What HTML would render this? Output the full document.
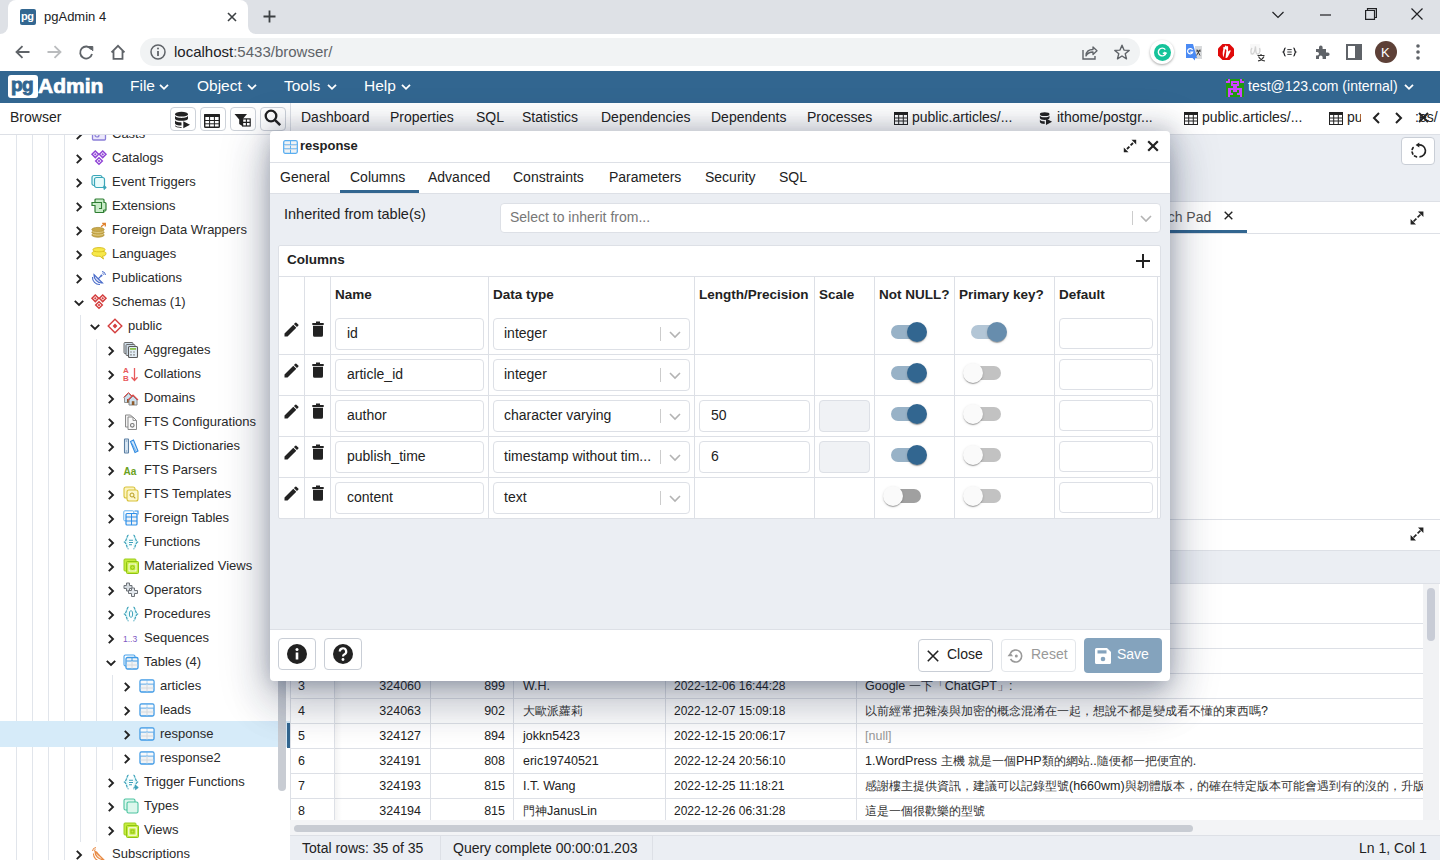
<!DOCTYPE html><html><head><meta charset="utf-8"><title>pgAdmin 4</title><style>
*{box-sizing:border-box;margin:0;padding:0}
html,body{width:1440px;height:860px;overflow:hidden;background:#fff;font-family:"Liberation Sans",sans-serif;color:#222}
.ab{position:absolute}
.t{position:absolute;white-space:nowrap;line-height:1}
svg{position:absolute;overflow:visible}
</style></head><body>
<div class="ab" style="left:0;top:0;width:1440px;height:34px;background:#dee1e6"></div>
<div class="ab" style="left:8px;top:0px;width:240px;height:35px;background:#fff;border-radius:8px 8px 0 0"></div>
<div class="ab" style="left:0px;top:26px;width:8px;height:8px;background:#fff"></div><div class="ab" style="left:0px;top:26px;width:8px;height:8px;background:#dee1e6;border-bottom-right-radius:8px"></div>
<div class="ab" style="left:248px;top:26px;width:8px;height:8px;background:#fff"></div><div class="ab" style="left:248px;top:26px;width:8px;height:8px;background:#dee1e6;border-bottom-left-radius:8px"></div>
<div class="ab" style="left:20px;top:9px;width:16px;height:16px;background:#336791;border-radius:2px"></div>
<div class="t" style="left:21px;top:11px;font-size:11px;font-weight:bold;color:#fff;letter-spacing:-0.5px">pg</div>
<div class="t" style="left:44px;top:10px;font-size:13px;color:#202124">pgAdmin 4</div>
<svg style="left:227px;top:12px" width="10" height="10" viewBox="0 0 10 10"><path d="M1 1L9 9M9 1L1 9" stroke="#3c4043" stroke-width="1.6"/></svg>
<svg style="left:263px;top:10px" width="13" height="13" viewBox="0 0 13 13"><path d="M6.5 0.5V12.5M0.5 6.5H12.5" stroke="#3c4043" stroke-width="1.8"/></svg>
<svg style="left:1272px;top:11px" width="12" height="8" viewBox="0 0 12 8"><path d="M0.5 1L6 6.5L11.5 1" fill="none" stroke="#202124" stroke-width="1.2"/></svg>
<svg style="left:1320px;top:14px" width="11" height="2" viewBox="0 0 11 2"><path d="M0 1H11" stroke="#202124" stroke-width="1.2"/></svg>
<svg style="left:1365px;top:8px" width="12" height="12" viewBox="0 0 12 12"><path d="M2.5 2.5V0.6H11.4V9.5H9.5M0.6 2.5H9.5V11.4H0.6Z" fill="none" stroke="#202124" stroke-width="1.2"/></svg>
<svg style="left:1411px;top:8px" width="12" height="12" viewBox="0 0 12 12"><path d="M0.5 0.5L11.5 11.5M11.5 0.5L0.5 11.5" stroke="#202124" stroke-width="1.2"/></svg>
<div class="ab" style="left:0;top:34px;width:1440px;height:37px;background:#fff"></div>
<svg style="left:15px;top:45px" width="15" height="14" viewBox="0 0 15 14"><path d="M14.5 7H2M7.5 1.2L1.5 7L7.5 12.8" fill="none" stroke="#5f6368" stroke-width="1.8"/></svg>
<svg style="left:47px;top:45px" width="15" height="14" viewBox="0 0 15 14"><path d="M0.5 7H13M7.5 1.2L13.5 7L7.5 12.8" fill="none" stroke="#babcbe" stroke-width="1.8"/></svg>
<svg style="left:79px;top:45px" width="15" height="15" viewBox="0 0 15 15"><path d="M12.2 4.2A6 6 0 1 0 13 9" fill="none" stroke="#5f6368" stroke-width="1.8"/><path d="M9.5 1.5H13.8V5.8Z" fill="#5f6368" stroke="#5f6368" stroke-width="1"/></svg>
<svg style="left:110px;top:44px" width="16" height="16" viewBox="0 0 16 16"><path d="M1.5 8.3L8 1.8L14.5 8.3M3.5 6.5V14.8H12.5V6.5" fill="none" stroke="#5f6368" stroke-width="1.8"/></svg>
<div class="ab" style="left:140px;top:38px;width:1000px;height:28px;background:#f1f3f4;border-radius:14px"></div>
<svg style="left:150px;top:44px" width="16" height="16" viewBox="0 0 16 16"><circle cx="8" cy="8" r="7" fill="none" stroke="#5f6368" stroke-width="1.5"/><path d="M8 7V12" stroke="#5f6368" stroke-width="1.8"/><circle cx="8" cy="4.6" r="1" fill="#5f6368"/></svg>
<div class="t" style="left:174px;top:44px;font-size:15px;color:#202124">localhost<span style="color:#5f6368">:5433/browser/</span></div>
<svg style="left:1082px;top:44px" width="16" height="16" viewBox="0 0 16 16"><path d="M1 6V15H13V12" fill="none" stroke="#5f6368" stroke-width="1.4"/><path d="M4 12C4 7 7 5.5 11 5.5V3L15 6.8L11 10.5V8C8 8 5.5 9 4 12Z" fill="none" stroke="#5f6368" stroke-width="1.3" stroke-linejoin="round"/></svg>
<svg style="left:1114px;top:44px" width="16" height="16" viewBox="0 0 16 16"><path d="M8 1.2L10 6.1L15.2 6.4L11.2 9.7L12.5 14.8L8 12L3.5 14.8L4.8 9.7L0.8 6.4L6 6.1Z" fill="none" stroke="#5f6368" stroke-width="1.4" stroke-linejoin="round"/></svg>
<div class="ab" style="left:1150px;top:40px;width:24px;height:24px;border-radius:50%;background:#fff;box-shadow:0 1px 2.5px rgba(0,0,0,.35)"></div><div class="ab" style="left:1153.5px;top:43.5px;width:17px;height:17px;border-radius:50%;background:#15c39a"></div>
<svg style="left:1157px;top:47px" width="10" height="10" viewBox="0 0 10 10"><path d="M8.3 2.6A3.9 3.9 0 1 0 8.9 6.3H5.8" fill="none" stroke="#fff" stroke-width="1.4"/><path d="M7.3 5L9 6.3L7.6 8" fill="none" stroke="#fff" stroke-width="1.1"/></svg>
<svg style="left:1180px;top:38px" width="120" height="28" viewBox="0 0 120 28"><rect x="15" y="8" width="7" height="13" fill="#d8dadc"/><path d="M17 11.5L20 17.5M20 11.5L16.5 17.5M16 13H21" stroke="#333" stroke-width="0.9" fill="none"/><path d="M6 6H13L17 20H15L15 22.5L12.5 20H6Z" fill="#4a8af4"/><path d="M12.5 12A2.6 2.6 0 1 0 12.6 14.2H10.2" fill="none" stroke="#fff" stroke-width="1.2"/><path d="M42.5 6H49.5L54 10.5V17.5L49.5 22H42.5L38 17.5V10.5Z" fill="#e00a0a"/><path d="M43.5 19.5C42.5 17 42.5 14 43.3 11.5V9.5C43.3 8.5 44.9 8.5 44.9 9.5V12.5M44.9 11V8.3C44.9 7.3 46.5 7.3 46.5 8.3V12M46.5 11.5V8.8C46.5 7.8 48.1 7.8 48.1 8.8V13.5L49.5 12.5C50.3 12 51 12.8 50.5 13.5L48 18.5C47.5 19.5 46.5 20 45.5 20Z" fill="#fff"/><path d="M72 10C70.5 12 70.5 16 72.5 16C74.5 16 75 11 75.5 8.5C75.8 12 75.5 16.5 78 16C80 15.5 80 12 79.5 10" fill="none" stroke="#b5b5b5" stroke-width="1.3"/><rect x="70" y="6" width="10" height="11" fill="#f2f2f2" opacity=".5"/><path d="M77.5 17.5H84.5M81 16V17.5M78.5 18.5C80 21.5 82 22.5 85 23M84 18.5C82.5 21.5 80.5 22.5 78 23" fill="none" stroke="#333" stroke-width="1.1"/><path d="M105.5 10C104 10 104.5 13.5 103.3 14C104.5 14.5 104 18 105.5 18M113.5 10C115 10 114.5 13.5 115.7 14C114.5 14.5 115 18 113.5 18" fill="none" stroke="#202124" stroke-width="1.3"/><path d="M107.3 11.6H111.7M107.3 14H111.7M107.3 16.4H111.7" stroke="#202124" stroke-width="0.9"/></svg>
<svg style="left:1314px;top:44px" width="16" height="16" viewBox="0 0 16 16"><path d="M2 5H5V3.2A1.8 1.8 0 0 1 8.6 3.2V5H12V8.4H13.8A1.8 1.8 0 0 1 13.8 12H12V15H8.6V13.2A1.8 1.8 0 0 0 5 13.2V15H2V11.6H3.2A1.8 1.8 0 0 0 3.2 8H2Z" fill="#5f6368"/></svg>
<svg style="left:1346px;top:44px" width="16" height="16" viewBox="0 0 16 16"><rect x="1" y="1" width="14" height="14" fill="none" stroke="#5f6368" stroke-width="2"/><rect x="9" y="1" width="6" height="14" fill="#5f6368"/></svg>
<div class="ab" style="left:1375px;top:41px;width:22px;height:22px;border-radius:50%;background:#5d4037"></div><div class="t" style="left:1381px;top:46px;font-size:13px;color:#fff">K</div>
<svg style="left:1416px;top:44px" width="4" height="16" viewBox="0 0 4 16"><circle cx="2" cy="2" r="1.8" fill="#5f6368"/><circle cx="2" cy="8" r="1.8" fill="#5f6368"/><circle cx="2" cy="14" r="1.8" fill="#5f6368"/></svg>
<div class="ab" style="left:0;top:71px;width:1440px;height:32px;background:#326690"></div>
<div class="ab" style="left:8px;top:75px;width:30px;height:23px;background:#fff;border-radius:3px"></div>
<div class="t" style="left:11px;top:75px;font-size:19px;font-weight:bold;color:#326690;letter-spacing:-0.5px;-webkit-text-stroke:0.9px #326690">pg</div>
<div class="t" style="left:38px;top:75px;font-size:21px;font-weight:bold;color:#fff;letter-spacing:0px;-webkit-text-stroke:0.7px #fff">Admin</div>
<div class="t" style="left:130px;top:78px;font-size:15.5px;color:#fff">File</div><svg style="left:159px;top:84px" width="10" height="6" viewBox="0 0 10 6"><path d="M1 0.8L5 4.8L9 0.8" fill="none" stroke="#fff" stroke-width="1.8"/></svg>
<div class="t" style="left:197px;top:78px;font-size:15.5px;color:#fff">Object</div><svg style="left:247px;top:84px" width="10" height="6" viewBox="0 0 10 6"><path d="M1 0.8L5 4.8L9 0.8" fill="none" stroke="#fff" stroke-width="1.8"/></svg>
<div class="t" style="left:284px;top:78px;font-size:15.5px;color:#fff">Tools</div><svg style="left:327px;top:84px" width="10" height="6" viewBox="0 0 10 6"><path d="M1 0.8L5 4.8L9 0.8" fill="none" stroke="#fff" stroke-width="1.8"/></svg>
<div class="t" style="left:364px;top:78px;font-size:15.5px;color:#fff">Help</div><svg style="left:401px;top:84px" width="10" height="6" viewBox="0 0 10 6"><path d="M1 0.8L5 4.8L9 0.8" fill="none" stroke="#fff" stroke-width="1.8"/></svg>
<svg style="left:1226px;top:79px" width="18" height="18" viewBox="0 0 10 10" shape-rendering="crispEdges"><rect width="10" height="10" fill="#1f9a0e"/><g fill="#cc44ff"><rect x="1" y="0" width="1.02" height="1.02"/><rect x="8" y="0" width="1.02" height="1.02"/><rect x="0" y="1" width="1.02" height="1.02"/><rect x="1" y="1" width="1.02" height="1.02"/><rect x="3" y="1" width="1.02" height="1.02"/><rect x="4" y="1" width="1.02" height="1.02"/><rect x="5" y="1" width="1.02" height="1.02"/><rect x="6" y="1" width="1.02" height="1.02"/><rect x="8" y="1" width="1.02" height="1.02"/><rect x="9" y="1" width="1.02" height="1.02"/><rect x="3" y="2" width="1.02" height="1.02"/><rect x="6" y="2" width="1.02" height="1.02"/><rect x="3" y="3" width="1.02" height="1.02"/><rect x="4" y="3" width="1.02" height="1.02"/><rect x="5" y="3" width="1.02" height="1.02"/><rect x="6" y="3" width="1.02" height="1.02"/><rect x="4" y="4" width="1.02" height="1.02"/><rect x="5" y="4" width="1.02" height="1.02"/><rect x="1" y="5" width="1.02" height="1.02"/><rect x="2" y="5" width="1.02" height="1.02"/><rect x="3" y="5" width="1.02" height="1.02"/><rect x="4" y="5" width="1.02" height="1.02"/><rect x="5" y="5" width="1.02" height="1.02"/><rect x="6" y="5" width="1.02" height="1.02"/><rect x="7" y="5" width="1.02" height="1.02"/><rect x="8" y="5" width="1.02" height="1.02"/><rect x="1" y="6" width="1.02" height="1.02"/><rect x="2" y="6" width="1.02" height="1.02"/><rect x="4" y="6" width="1.02" height="1.02"/><rect x="5" y="6" width="1.02" height="1.02"/><rect x="7" y="6" width="1.02" height="1.02"/><rect x="8" y="6" width="1.02" height="1.02"/><rect x="1" y="7" width="1.02" height="1.02"/><rect x="2" y="7" width="1.02" height="1.02"/><rect x="7" y="7" width="1.02" height="1.02"/><rect x="8" y="7" width="1.02" height="1.02"/><rect x="1" y="8" width="1.02" height="1.02"/><rect x="2" y="8" width="1.02" height="1.02"/><rect x="3" y="8" width="1.02" height="1.02"/><rect x="6" y="8" width="1.02" height="1.02"/><rect x="7" y="8" width="1.02" height="1.02"/><rect x="8" y="8" width="1.02" height="1.02"/><rect x="1" y="9" width="1.02" height="1.02"/><rect x="8" y="9" width="1.02" height="1.02"/></g></svg>
<div class="t" style="left:1248px;top:79px;font-size:14px;color:#fff">test@123.com (internal)</div><svg style="left:1404px;top:84px" width="10" height="6" viewBox="0 0 10 6"><path d="M1 0.8L5 4.8L9 0.8" fill="none" stroke="#fff" stroke-width="1.8"/></svg>
<div class="ab" style="left:0;top:103px;width:290px;height:32px;background:#fff;border-bottom:1px solid #dde0e6"></div>
<div class="t" style="left:10px;top:110px;font-size:14px;color:#222">Browser</div>
<div class="ab" style="left:170px;top:107px;width:26px;height:24px;border:1px solid #cdd2d9;border-radius:4px;background:#fff"></div>
<div class="ab" style="left:200px;top:107px;width:26px;height:24px;border:1px solid #cdd2d9;border-radius:4px;background:#fff"></div>
<div class="ab" style="left:230px;top:107px;width:26px;height:24px;border:1px solid #cdd2d9;border-radius:4px;background:#fff"></div>
<div class="ab" style="left:260px;top:107px;width:26px;height:24px;border:1px solid #cdd2d9;border-radius:4px;background:#fff"></div>
<svg style="left:174px;top:111px" width="17" height="18" viewBox="0 0 17 18"><ellipse cx="7.5" cy="3.2" rx="6.5" ry="2.4" fill="#222"/><path d="M1 4.6V7.4C1 8.9 4 9.8 7.5 9.8S14 8.9 14 7.4V4.6C14 6.1 11 7 7.5 7S1 6.1 1 4.6Z" fill="#222"/><path d="M1 9V12.2C1 13.7 4 14.6 7.5 14.6V11.4C4 11.4 1 10.5 1 9Z" fill="#222"/><path d="M1 13.8V14.5C1 16 4 16.9 7.5 16.9V16C4 16 1 15.3 1 13.8Z" fill="#222"/><path d="M9.3 10.2V17.3L16 13.75Z" fill="#222"/></svg>
<svg style="left:204px;top:114px" width="16" height="14" viewBox="0 0 16 14"><rect x="0.7" y="0.7" width="14.6" height="12.6" rx=".8" fill="#fff" stroke="#222" stroke-width="1.4"/><rect x="0" y="0" width="16" height="3" rx=".8" fill="#222"/><path d="M0.7 6.5H15.3M0.7 9.8H15.3M5.6 3V13.3M10.4 3V13.3" stroke="#222" stroke-width="1"/></svg>
<svg style="left:234px;top:113px" width="17" height="14" viewBox="0 0 17 14"><path d="M0.5 1H13L8.3 6.5V13L5.2 11V6.5Z" fill="#222"/><rect x="8.6" y="5.9" width="7.6" height="7.1" fill="#fff" stroke="#222" stroke-width="1.2"/><path d="M8.6 9.4H16.2M12.4 5.9V13" stroke="#222" stroke-width="1.1"/></svg>
<svg style="left:264px;top:109px" width="18" height="18" viewBox="0 0 18 18"><circle cx="7" cy="7" r="5.3" fill="none" stroke="#222" stroke-width="2.3"/><path d="M10.8 10.8L16.2 16.2" stroke="#222" stroke-width="2.5"/></svg>
<div class="ab" style="left:290px;top:103px;width:1150px;height:31px;background:#fff;border-left:1px solid #dde0e6"></div>
<div class="t" style="left:301px;top:110px;font-size:14px;color:#222">Dashboard</div>
<div class="t" style="left:390px;top:110px;font-size:14px;color:#222">Properties</div>
<div class="t" style="left:476px;top:110px;font-size:14px;color:#222">SQL</div>
<div class="t" style="left:522px;top:110px;font-size:14px;color:#222">Statistics</div>
<div class="t" style="left:601px;top:110px;font-size:14px;color:#222">Dependencies</div>
<div class="t" style="left:711px;top:110px;font-size:14px;color:#222">Dependents</div>
<div class="t" style="left:807px;top:110px;font-size:14px;color:#222">Processes</div>
<svg style="left:894px;top:112px" width="14" height="13" viewBox="0 0 14 13"><rect x="0.5" y="0.5" width="13" height="12" fill="none" stroke="#222" stroke-width="1"/><rect x="0" y="0" width="14" height="3" fill="#222"/><path d="M0 6H14M0 9H14M4.7 3V13M9.3 3V13" stroke="#222" stroke-width="1"/></svg><div class="t" style="left:912px;top:110px;font-size:14px;color:#222">public.articles/...</div>
<svg style="left:1039px;top:111px" width="14" height="15" viewBox="0 0 16 16"><ellipse cx="6.5" cy="3" rx="5.5" ry="2.2" fill="#222"/><path d="M1 4.5V7.5C1 9 4 9.7 6.5 9.7S12 9 12 7.5V4.5C12 6 9 6.7 6.5 6.7S1 6 1 4.5Z" fill="#222"/><path d="M1 9V12C1 13.5 4 14.2 6.5 14.2V11.2C4 11.2 1 10.5 1 9Z" fill="#222"/><path d="M8 8V15.5L15 11.7Z" fill="#222"/></svg>
<div class="t" style="left:1057px;top:110px;font-size:14px;color:#222">ithome/postgr...</div>
<svg style="left:1184px;top:112px" width="14" height="13" viewBox="0 0 14 13"><rect x="0.5" y="0.5" width="13" height="12" fill="none" stroke="#222" stroke-width="1"/><rect x="0" y="0" width="14" height="3" fill="#222"/><path d="M0 6H14M0 9H14M4.7 3V13M9.3 3V13" stroke="#222" stroke-width="1"/></svg><div class="t" style="left:1202px;top:110px;font-size:14px;color:#222">public.articles/...</div>
<svg style="left:1329px;top:112px" width="14" height="13" viewBox="0 0 14 13"><rect x="0.5" y="0.5" width="13" height="12" fill="none" stroke="#222" stroke-width="1"/><rect x="0" y="0" width="14" height="3" fill="#222"/><path d="M0 6H14M0 9H14M4.7 3V13M9.3 3V13" stroke="#222" stroke-width="1"/></svg><div class="ab" style="left:1347px;top:103px;width:14px;height:30px;overflow:hidden"><div class="t" style="left:0;top:7px;font-size:14px;color:#222">public</div></div>
<svg style="left:1372px;top:112px" width="8" height="12" viewBox="0 0 8 12"><path d="M7 1L2 6L7 11" fill="none" stroke="#222" stroke-width="2"/></svg>
<svg style="left:1395px;top:112px" width="8" height="12" viewBox="0 0 8 12"><path d="M1 1L6 6L1 11" fill="none" stroke="#222" stroke-width="2"/></svg>
<div class="ab" style="left:1415px;top:103px;width:25px;height:30px;overflow:hidden"><div class="t" style="left:0px;top:7px;font-size:14px;color:#222">:es/</div></div>
<svg style="left:1418px;top:112px" width="11" height="11" viewBox="0 0 11 11"><path d="M1 1L10 10M10 1L1 10" stroke="#222" stroke-width="2"/></svg>
<div class="ab" style="left:290px;top:134px;width:1150px;height:726px;background:#fff;border-left:1px solid #dde0e6"></div>
<div class="ab" style="left:290px;top:134px;width:1150px;height:68px;background:#ebeef3;border-top:1px solid #dde0e6;border-bottom:1px solid #dde0e6"></div>
<div class="ab" style="left:1401px;top:137px;width:34px;height:28px;background:#fff;border:1px solid #c9ced6;border-radius:4px"></div>
<svg style="left:1410px;top:143px" width="16" height="16" viewBox="0 0 16 16"><path d="M8 2A6 6 0 1 1 9.45 13.82" fill="none" stroke="#222" stroke-width="1.7"/><path d="M6.45 13.8L4.56 12.91M2.8 11L2.09 9.04M2.2 6.45L3.09 4.56" fill="none" stroke="#222" stroke-width="1.7" stroke-linecap="round"/><path d="M9.3 -0.6L5.6 2L9.3 4.6Z" fill="#222"/></svg>
<div class="ab" style="left:290px;top:202px;width:1150px;height:32px;background:#fff;border-bottom:1px solid #dde0e6"></div>
<div class="t" style="left:1135px;top:210px;font-size:14px;color:#555">Scratch Pad</div>
<svg style="left:1224px;top:211px" width="9" height="9" viewBox="0 0 9 9"><path d="M0.7 0.7L8.3 8.3M8.3 0.7L0.7 8.3" stroke="#222" stroke-width="1.4"/></svg>
<div class="ab" style="left:1080px;top:230px;width:167px;height:3px;background:#326690"></div>
<svg style="left:1410px;top:211px" width="14" height="14" viewBox="0 0 14 14"><path d="M10.5 3.5L7.6 6.4M6.4 7.6L3.5 10.5" stroke="#222" stroke-width="1.7"/><path d="M8 0.6H13.4V6Z M0.6 8V13.4H6Z" fill="#222"/></svg>
<div class="ab" style="left:290px;top:519px;width:1150px;height:1px;background:#dde0e6"></div>
<svg style="left:1410px;top:527px" width="14" height="14" viewBox="0 0 14 14"><path d="M10.5 3.5L7.6 6.4M6.4 7.6L3.5 10.5" stroke="#222" stroke-width="1.7"/><path d="M8 0.6H13.4V6Z M0.6 8V13.4H6Z" fill="#222"/></svg>
<div class="ab" style="left:290px;top:550px;width:1150px;height:34px;background:#ebeef3;border-top:1px solid #dde0e6;border-bottom:1px solid #dde0e6"></div>
<div class="ab" style="left:0;top:135px;width:290px;height:725px;overflow:hidden;background:#fff">
<div class="ab" style="left:16px;top:0px;width:1px;height:725px;background:#e1e5eb"></div>
<div class="ab" style="left:32px;top:0px;width:1px;height:725px;background:#e1e5eb"></div>
<div class="ab" style="left:48px;top:0px;width:1px;height:725px;background:#e1e5eb"></div>
<div class="ab" style="left:64px;top:0px;width:1px;height:725px;background:#e1e5eb"></div>
<div class="ab" style="left:80px;top:180px;width:1px;height:527px;background:#e1e5eb"></div>
<div class="ab" style="left:96px;top:204px;width:1px;height:503px;background:#e1e5eb"></div>
<div class="ab" style="left:112px;top:540px;width:1px;height:95px;background:#e1e5eb"></div>
<div class="ab" style="left:0;top:586px;width:290px;height:26px;background:#d6ebf9"></div>
<svg style="left:76px;top:-5px" width="6" height="10" viewBox="0 0 6 10"><path d="M0.8 0.8L5 5L0.8 9.2" fill="none" stroke="#222" stroke-width="1.9"/></svg>
<svg style="left:91px;top:-9px" width="16" height="16" viewBox="0 0 16 16"><rect x="1.5" y="3" width="13" height="11" rx="1" fill="#ebe7fb" stroke="#8b7fd8" stroke-width="1.3"/><circle cx="6" cy="9" r="2" fill="none" stroke="#8b7fd8" stroke-width="1.2"/><path d="M9 7L12 5" stroke="#8b7fd8" stroke-width="1.2"/></svg>
<div class="t" style="left:112px;top:-8px;font-size:13px;color:#2a2a2a">Casts</div>
<svg style="left:76px;top:19px" width="6" height="10" viewBox="0 0 6 10"><path d="M0.8 0.8L5 5L0.8 9.2" fill="none" stroke="#222" stroke-width="1.9"/></svg>
<svg style="left:91px;top:15px" width="16" height="16" viewBox="0 0 16 16"><g fill="#fff" stroke="#9146d6" stroke-width="1.5"><path d="M4.3 1L7.6 4.3L4.3 7.6L1 4.3Z"/><path d="M11.7 1L15 4.3L11.7 7.6L8.4 4.3Z"/><path d="M8 7.7L11.3 11L8 14.3L4.7 11Z"/></g><g fill="#9146d6"><circle cx="4.3" cy="4.3" r="1.1"/><circle cx="11.7" cy="4.3" r="1.1"/><circle cx="8" cy="11" r="1.1"/><circle cx="8" cy="4.3" r=".8"/></g></svg>
<div class="t" style="left:112px;top:16px;font-size:13px;color:#2a2a2a">Catalogs</div>
<svg style="left:76px;top:43px" width="6" height="10" viewBox="0 0 6 10"><path d="M0.8 0.8L5 5L0.8 9.2" fill="none" stroke="#222" stroke-width="1.9"/></svg>
<svg style="left:91px;top:39px" width="16" height="16" viewBox="0 0 16 16"><rect x="1" y="1.5" width="10" height="10" rx="2" fill="#e8fbfb" stroke="#3aa6b9" stroke-width="1.2"/><rect x="3.5" y="3.5" width="10" height="10" rx="2" fill="#e8fbfb" stroke="#3aa6b9" stroke-width="1.2"/><path d="M10 13.5H14.5M13 11.5L15.3 13.5L13 15.5Z" fill="#3aa6b9" stroke="#3aa6b9" stroke-width="1"/></svg>
<div class="t" style="left:112px;top:40px;font-size:13px;color:#2a2a2a">Event Triggers</div>
<svg style="left:76px;top:67px" width="6" height="10" viewBox="0 0 6 10"><path d="M0.8 0.8L5 5L0.8 9.2" fill="none" stroke="#222" stroke-width="1.9"/></svg>
<svg style="left:91px;top:63px" width="16" height="16" viewBox="0 0 16 16"><path d="M1 4.5H4V2A1 1 0 0 1 5 1H12A1 1 0 0 1 13 2V4.5H14A1 1 0 0 1 15 5.5V12L12.5 14.5H5A1 1 0 0 1 4 13.5V7.5H1Z" fill="#c9ecc9" stroke="#2e7d32" stroke-width="1.2"/><path d="M4 4.5H10.5V10.5H8" fill="none" stroke="#2e7d32" stroke-width="1.1"/><path d="M12.5 14.5V12H15" fill="#a5d6a7" stroke="#2e7d32" stroke-width="1"/></svg>
<div class="t" style="left:112px;top:64px;font-size:13px;color:#2a2a2a">Extensions</div>
<svg style="left:76px;top:91px" width="6" height="10" viewBox="0 0 6 10"><path d="M0.8 0.8L5 5L0.8 9.2" fill="none" stroke="#222" stroke-width="1.9"/></svg>
<svg style="left:91px;top:87px" width="16" height="16" viewBox="0 0 16 16"><g fill="#c9a94a" stroke="#a8882a" stroke-width=".7"><ellipse cx="7" cy="13" rx="6.2" ry="2.2"/><ellipse cx="7" cy="10.3" rx="6.2" ry="2.2"/><ellipse cx="7" cy="7.6" rx="6.2" ry="2.2"/></g><path d="M1.5 9.4C3 10.6 11 10.6 12.5 9.4M1.5 12C3 13.3 11 13.3 12.5 12" stroke="#f4e6b0" stroke-width=".7" fill="none"/><path d="M10 4.8L14 1.5M11.2 1.3H14.3V4.4" fill="none" stroke="#e0812b" stroke-width="1.3"/></svg>
<div class="t" style="left:112px;top:88px;font-size:13px;color:#2a2a2a">Foreign Data Wrappers</div>
<svg style="left:76px;top:115px" width="6" height="10" viewBox="0 0 6 10"><path d="M0.8 0.8L5 5L0.8 9.2" fill="none" stroke="#222" stroke-width="1.9"/></svg>
<svg style="left:91px;top:111px" width="16" height="16" viewBox="0 0 16 16"><path d="M2 3.5C2 1 14 1 14 3.5C14 4.5 13 5 12 5.3C14 5.6 15 6.3 15 7.5C15 9.5 13 10 11.5 10.2L12.5 13L9 10.3C5 10.5 1 9.8 1 7.5C1 6.3 2 5.6 3.5 5.3C2.5 5 2 4.5 2 3.5Z" fill="#f7e84a" stroke="#d9bf22" stroke-width="1"/><path d="M3.5 5.3C6 6 10 6 12 5.3" fill="none" stroke="#d9bf22" stroke-width=".9"/></svg>
<div class="t" style="left:112px;top:112px;font-size:13px;color:#2a2a2a">Languages</div>
<svg style="left:76px;top:139px" width="6" height="10" viewBox="0 0 6 10"><path d="M0.8 0.8L5 5L0.8 9.2" fill="none" stroke="#222" stroke-width="1.9"/></svg>
<svg style="left:91px;top:135px" width="16" height="16" viewBox="0 0 16 16"><path d="M3 4.5A8 8 0 0 0 11.5 13Z" fill="#d6dcf5" stroke="#4a6cc9" stroke-width="1.2"/><path d="M1.5 7A7 7 0 0 0 9 14.5" fill="none" stroke="#4a6cc9" stroke-width="1.1"/><path d="M7.2 8.8L10.5 5.5" stroke="#4a6cc9" stroke-width="1.2"/><circle cx="10.5" cy="5.5" r="1" fill="#4a6cc9"/><path d="M11 1.5A3.8 3.8 0 0 1 14.5 5M11.5 3.3A1.8 1.8 0 0 1 12.8 4.7" fill="none" stroke="#4a6cc9" stroke-width="1"/></svg>
<div class="t" style="left:112px;top:136px;font-size:13px;color:#2a2a2a">Publications</div>
<svg style="left:74px;top:165px" width="10" height="6" viewBox="0 0 10 6"><path d="M0.8 0.8L5 5L9.2 0.8" fill="none" stroke="#222" stroke-width="1.9"/></svg>
<svg style="left:91px;top:159px" width="16" height="16" viewBox="0 0 16 16"><g fill="#fff" stroke="#d43f3f" stroke-width="1.5"><path d="M4.3 1L7.6 4.3L4.3 7.6L1 4.3Z"/><path d="M11.7 1L15 4.3L11.7 7.6L8.4 4.3Z"/><path d="M8 7.7L11.3 11L8 14.3L4.7 11Z"/></g><g fill="#d43f3f"><circle cx="4.3" cy="4.3" r="1.1"/><circle cx="11.7" cy="4.3" r="1.1"/><circle cx="8" cy="11" r="1.1"/><circle cx="8" cy="4.3" r=".8"/></g></svg>
<div class="t" style="left:112px;top:160px;font-size:13px;color:#2a2a2a">Schemas (1)</div>
<svg style="left:90px;top:189px" width="10" height="6" viewBox="0 0 10 6"><path d="M0.8 0.8L5 5L9.2 0.8" fill="none" stroke="#222" stroke-width="1.9"/></svg>
<svg style="left:107px;top:183px" width="16" height="16" viewBox="0 0 16 16"><path d="M8 1.2L14.8 8L8 14.8L1.2 8Z" fill="none" stroke="#d43f3f" stroke-width="1.4"/><path d="M8 5.6L10.4 8L8 10.4L5.6 8Z" fill="#d43f3f"/></svg>
<div class="t" style="left:128px;top:184px;font-size:13px;color:#2a2a2a">public</div>
<svg style="left:108px;top:211px" width="6" height="10" viewBox="0 0 6 10"><path d="M0.8 0.8L5 5L0.8 9.2" fill="none" stroke="#222" stroke-width="1.9"/></svg>
<svg style="left:123px;top:207px" width="16" height="16" viewBox="0 0 16 16"><rect x="1" y="0.5" width="9" height="11" rx="1" fill="#cfdde8" stroke="#6b6b6b" stroke-width="1"/><rect x="3" y="2.5" width="9" height="11" rx="1" fill="#cfdde8" stroke="#6b6b6b" stroke-width="1"/><rect x="5.5" y="4.5" width="9" height="11" rx="1" fill="#e2edf5" stroke="#5a5a5a" stroke-width="1.1"/><rect x="7" y="6" width="6" height="1.8" fill="#8bc34a"/><path d="M7.3 10H8.7M10.3 10H11.7M7.3 12.8H8.7M10.3 12.8H11.7" stroke="#6b6b6b" stroke-width="1.2"/></svg>
<div class="t" style="left:144px;top:208px;font-size:13px;color:#2a2a2a">Aggregates</div>
<svg style="left:108px;top:235px" width="6" height="10" viewBox="0 0 6 10"><path d="M0.8 0.8L5 5L0.8 9.2" fill="none" stroke="#222" stroke-width="1.9"/></svg>
<svg style="left:123px;top:231px" width="16" height="16" viewBox="0 0 16 16"><text x="0" y="7.3" font-size="8" font-weight="bold" font-family="Liberation Sans" fill="#e8595a">A</text><text x="0" y="15.3" font-size="8" font-weight="bold" font-family="Liberation Sans" fill="#e8595a">B</text><path d="M11.5 2V14.3M8.5 11.3L11.5 14.5L14.5 11.3" fill="none" stroke="#e8595a" stroke-width="1.3"/></svg>
<div class="t" style="left:144px;top:232px;font-size:13px;color:#2a2a2a">Collations</div>
<svg style="left:108px;top:259px" width="6" height="10" viewBox="0 0 6 10"><path d="M0.8 0.8L5 5L0.8 9.2" fill="none" stroke="#222" stroke-width="1.9"/></svg>
<svg style="left:123px;top:255px" width="16" height="16" viewBox="0 0 16 16"><path d="M1.5 7.5L5.5 3.5L9.5 7.5V12.5H1.5Z" fill="#cde0ee" stroke="#888" stroke-width=".9"/><rect x="4" y="9" width="2.5" height="3.5" fill="#8d5a2b"/><path d="M0.5 7.5L5.5 2.5L10 7" fill="none" stroke="#e04a4a" stroke-width="1"/><path d="M6 10L10 6L14 10V15H6Z" fill="#cde0ee" stroke="#888" stroke-width="1"/><rect x="8.8" y="11.2" width="2.6" height="3.8" fill="#8d5a2b"/><path d="M5 10L10 5L15 10" fill="none" stroke="#e04a4a" stroke-width="1.1"/></svg>
<div class="t" style="left:144px;top:256px;font-size:13px;color:#2a2a2a">Domains</div>
<svg style="left:108px;top:283px" width="6" height="10" viewBox="0 0 6 10"><path d="M0.8 0.8L5 5L0.8 9.2" fill="none" stroke="#222" stroke-width="1.9"/></svg>
<svg style="left:123px;top:279px" width="16" height="16" viewBox="0 0 16 16"><path d="M2.5 1H7.5L10 3.5V13H2.5Z" fill="#f2f2f2" stroke="#8a8a8a" stroke-width="1"/><path d="M5 3H10L13.5 6.5V15.5H5Z" fill="#fafafa" stroke="#8a8a8a" stroke-width="1"/><path d="M10 3V6.5H13.5" fill="none" stroke="#8a8a8a" stroke-width=".9"/><circle cx="9.3" cy="11.3" r="1.8" fill="none" stroke="#777" stroke-width="1.1"/></svg>
<div class="t" style="left:144px;top:280px;font-size:13px;color:#2a2a2a">FTS Configurations</div>
<svg style="left:108px;top:307px" width="6" height="10" viewBox="0 0 6 10"><path d="M0.8 0.8L5 5L0.8 9.2" fill="none" stroke="#222" stroke-width="1.9"/></svg>
<svg style="left:123px;top:303px" width="16" height="16" viewBox="0 0 16 16"><rect x="1.5" y="1" width="4" height="14" rx=".5" fill="#dbe8f4" stroke="#5b7fa3" stroke-width="1.1"/><path d="M2.8 3H4.2M2.8 13H4.2" stroke="#5b7fa3" stroke-width=".8"/><path d="M7.5 3.5L10.5 2L15 13L12 14.5Z" fill="#cfe6fb" stroke="#2f8ae0" stroke-width="1.1"/><path d="M9 5.5L13 13" stroke="#2f8ae0" stroke-width=".6"/></svg>
<div class="t" style="left:144px;top:304px;font-size:13px;color:#2a2a2a">FTS Dictionaries</div>
<svg style="left:108px;top:331px" width="6" height="10" viewBox="0 0 6 10"><path d="M0.8 0.8L5 5L0.8 9.2" fill="none" stroke="#222" stroke-width="1.9"/></svg>
<svg style="left:123px;top:327px" width="16" height="16" viewBox="0 0 16 16"><text x="0.5" y="13" font-size="10" font-weight="bold" font-family="Liberation Sans" fill="#6aa121">Aa</text></svg>
<div class="t" style="left:144px;top:328px;font-size:13px;color:#2a2a2a">FTS Parsers</div>
<svg style="left:108px;top:355px" width="6" height="10" viewBox="0 0 6 10"><path d="M0.8 0.8L5 5L0.8 9.2" fill="none" stroke="#222" stroke-width="1.9"/></svg>
<svg style="left:123px;top:351px" width="16" height="16" viewBox="0 0 16 16"><rect x="1" y="1" width="11" height="11" rx="2" fill="#fcf4bf" stroke="#d8c23a" stroke-width="1.1"/><rect x="4" y="4" width="11" height="11" rx="2" fill="#fdf7cc" stroke="#d8c23a" stroke-width="1.1"/><circle cx="9" cy="9" r="2" fill="none" stroke="#b89d20" stroke-width="1"/><path d="M10.4 10.4L12.3 12.3" stroke="#b89d20" stroke-width="1.1"/></svg>
<div class="t" style="left:144px;top:352px;font-size:13px;color:#2a2a2a">FTS Templates</div>
<svg style="left:108px;top:379px" width="6" height="10" viewBox="0 0 6 10"><path d="M0.8 0.8L5 5L0.8 9.2" fill="none" stroke="#222" stroke-width="1.9"/></svg>
<svg style="left:123px;top:375px" width="16" height="16" viewBox="0 0 16 16"><rect x="0.8" y="0.8" width="10" height="10" rx="1" fill="none" stroke="#66b3f0" stroke-width="1"/><rect x="3" y="3.5" width="11" height="11.5" rx="1" fill="#eef2f6" stroke="#2f8fe8" stroke-width="1.2"/><path d="M3 7H14M3 11H14M8.5 3.5V15" stroke="#2f8fe8" stroke-width="1"/><path d="M11.5 1H15V4.5" fill="none" stroke="#2f8fe8" stroke-width="1.1"/></svg>
<div class="t" style="left:144px;top:376px;font-size:13px;color:#2a2a2a">Foreign Tables</div>
<svg style="left:108px;top:403px" width="6" height="10" viewBox="0 0 6 10"><path d="M0.8 0.8L5 5L0.8 9.2" fill="none" stroke="#222" stroke-width="1.9"/></svg>
<svg style="left:123px;top:399px" width="16" height="16" viewBox="0 0 16 16"><path d="M5.5 1.2C3.5 1.5 4 6.5 1.5 8C4 9.5 3.5 14.5 5.5 14.8M10.5 1.2C12.5 1.5 12 6.5 14.5 8C12 9.5 12.5 14.5 10.5 14.8" fill="#e6fafc" stroke="#3aa0b8" stroke-width="1.2" stroke-dasharray="3 .8"/><path d="M6 6.3H10M6 8.5H10M6 10.7H9" stroke="#3aa0b8" stroke-width="1.1"/></svg>
<div class="t" style="left:144px;top:400px;font-size:13px;color:#2a2a2a">Functions</div>
<svg style="left:108px;top:427px" width="6" height="10" viewBox="0 0 6 10"><path d="M0.8 0.8L5 5L0.8 9.2" fill="none" stroke="#222" stroke-width="1.9"/></svg>
<svg style="left:123px;top:423px" width="16" height="16" viewBox="0 0 16 16"><rect x="1" y="1" width="12" height="12" rx="1" fill="#c5ec3e" stroke="#9ccc1c" stroke-width="1"/><rect x="3.5" y="3.5" width="12" height="12" rx="1" fill="#c5ec3e" stroke="#8fc313" stroke-width="1"/><rect x="6" y="6" width="7" height="7" fill="none" stroke="#fff" stroke-width=".9"/><circle cx="9.5" cy="9.5" r="1.8" fill="none" stroke="#8fc313" stroke-width="1"/></svg>
<div class="t" style="left:144px;top:424px;font-size:13px;color:#2a2a2a">Materialized Views</div>
<svg style="left:108px;top:451px" width="6" height="10" viewBox="0 0 6 10"><path d="M0.8 0.8L5 5L0.8 9.2" fill="none" stroke="#222" stroke-width="1.9"/></svg>
<svg style="left:123px;top:447px" width="16" height="16" viewBox="0 0 16 16"><path d="M3.5 1H6.5V3.5H9V6.5H6.5V9H3.5V6.5H1V3.5H3.5Z" fill="#d5dbe0" stroke="#6e7378" stroke-width="1"/><path d="M8.5 6H11.5V8.5H14.5V11.5H11.5V14.5H8.5V11.5H5.5V8.5H8.5Z" fill="#e4e9ee" stroke="#6e7378" stroke-width="1"/></svg>
<div class="t" style="left:144px;top:448px;font-size:13px;color:#2a2a2a">Operators</div>
<svg style="left:108px;top:475px" width="6" height="10" viewBox="0 0 6 10"><path d="M0.8 0.8L5 5L0.8 9.2" fill="none" stroke="#222" stroke-width="1.9"/></svg>
<svg style="left:123px;top:471px" width="16" height="16" viewBox="0 0 16 16"><path d="M5.5 1.2C3.5 1.5 4 6.5 1.5 8C4 9.5 3.5 14.5 5.5 14.8M10.5 1.2C12.5 1.5 12 6.5 14.5 8C12 9.5 12.5 14.5 10.5 14.8" fill="#e6fafc" stroke="#3aa0b8" stroke-width="1.2" stroke-dasharray="3 .8"/><path d="M7.5 4.5C6 6 6 10 7.5 11.5M8.5 4.5C10 6 10 10 8.5 11.5" fill="none" stroke="#3aa0b8" stroke-width="1"/></svg>
<div class="t" style="left:144px;top:472px;font-size:13px;color:#2a2a2a">Procedures</div>
<svg style="left:108px;top:499px" width="6" height="10" viewBox="0 0 6 10"><path d="M0.8 0.8L5 5L0.8 9.2" fill="none" stroke="#222" stroke-width="1.9"/></svg>
<svg style="left:123px;top:495px" width="16" height="16" viewBox="0 0 16 16"><text x="0" y="11.5" font-size="8.5" font-family="Liberation Sans" fill="#7e57c2">1..3</text></svg>
<div class="t" style="left:144px;top:496px;font-size:13px;color:#2a2a2a">Sequences</div>
<svg style="left:106px;top:525px" width="10" height="6" viewBox="0 0 10 6"><path d="M0.8 0.8L5 5L9.2 0.8" fill="none" stroke="#222" stroke-width="1.9"/></svg>
<svg style="left:123px;top:519px" width="16" height="16" viewBox="0 0 16 16"><rect x="1" y="1" width="11" height="11" rx="1.5" fill="#fff" stroke="#4aa3ec" stroke-width="1.1"/><rect x="3" y="3.5" width="12" height="11.5" rx="1.5" fill="#f1f3f5" stroke="#3f9ae6" stroke-width="1.3"/><path d="M3.5 7H14.5M9 4V7" stroke="#3f9ae6" stroke-width="1"/><path d="M3.5 11H14.5M9 7V14.5" stroke="#d3d8dd" stroke-width="1"/></svg>
<div class="t" style="left:144px;top:520px;font-size:13px;color:#2a2a2a">Tables (4)</div>
<svg style="left:124px;top:547px" width="6" height="10" viewBox="0 0 6 10"><path d="M0.8 0.8L5 5L0.8 9.2" fill="none" stroke="#222" stroke-width="1.9"/></svg>
<svg style="left:139px;top:543px" width="16" height="16" viewBox="0 0 16 16"><rect x="1" y="2" width="14" height="12" rx="1.5" fill="#f1f3f5" stroke="#3f9ae6" stroke-width="1.3"/><path d="M1.5 6H14.5M8 2.5V6" stroke="#3f9ae6" stroke-width="1"/><path d="M1.5 10H14.5M8 6V13.5" stroke="#d3d8dd" stroke-width="1"/><rect x="1.6" y="2.6" width="12.8" height="3" fill="#fff" opacity=".6"/></svg>
<div class="t" style="left:160px;top:544px;font-size:13px;color:#2a2a2a">articles</div>
<svg style="left:124px;top:571px" width="6" height="10" viewBox="0 0 6 10"><path d="M0.8 0.8L5 5L0.8 9.2" fill="none" stroke="#222" stroke-width="1.9"/></svg>
<svg style="left:139px;top:567px" width="16" height="16" viewBox="0 0 16 16"><rect x="1" y="2" width="14" height="12" rx="1.5" fill="#f1f3f5" stroke="#3f9ae6" stroke-width="1.3"/><path d="M1.5 6H14.5M8 2.5V6" stroke="#3f9ae6" stroke-width="1"/><path d="M1.5 10H14.5M8 6V13.5" stroke="#d3d8dd" stroke-width="1"/><rect x="1.6" y="2.6" width="12.8" height="3" fill="#fff" opacity=".6"/></svg>
<div class="t" style="left:160px;top:568px;font-size:13px;color:#2a2a2a">leads</div>
<svg style="left:124px;top:595px" width="6" height="10" viewBox="0 0 6 10"><path d="M0.8 0.8L5 5L0.8 9.2" fill="none" stroke="#222" stroke-width="1.9"/></svg>
<svg style="left:139px;top:591px" width="16" height="16" viewBox="0 0 16 16"><rect x="1" y="2" width="14" height="12" rx="1.5" fill="#f1f3f5" stroke="#3f9ae6" stroke-width="1.3"/><path d="M1.5 6H14.5M8 2.5V6" stroke="#3f9ae6" stroke-width="1"/><path d="M1.5 10H14.5M8 6V13.5" stroke="#d3d8dd" stroke-width="1"/><rect x="1.6" y="2.6" width="12.8" height="3" fill="#fff" opacity=".6"/></svg>
<div class="t" style="left:160px;top:592px;font-size:13px;color:#2a2a2a">response</div>
<svg style="left:124px;top:619px" width="6" height="10" viewBox="0 0 6 10"><path d="M0.8 0.8L5 5L0.8 9.2" fill="none" stroke="#222" stroke-width="1.9"/></svg>
<svg style="left:139px;top:615px" width="16" height="16" viewBox="0 0 16 16"><rect x="1" y="2" width="14" height="12" rx="1.5" fill="#f1f3f5" stroke="#3f9ae6" stroke-width="1.3"/><path d="M1.5 6H14.5M8 2.5V6" stroke="#3f9ae6" stroke-width="1"/><path d="M1.5 10H14.5M8 6V13.5" stroke="#d3d8dd" stroke-width="1"/><rect x="1.6" y="2.6" width="12.8" height="3" fill="#fff" opacity=".6"/></svg>
<div class="t" style="left:160px;top:616px;font-size:13px;color:#2a2a2a">response2</div>
<svg style="left:108px;top:643px" width="6" height="10" viewBox="0 0 6 10"><path d="M0.8 0.8L5 5L0.8 9.2" fill="none" stroke="#222" stroke-width="1.9"/></svg>
<svg style="left:123px;top:639px" width="16" height="16" viewBox="0 0 16 16"><path d="M5.5 1.2C3.5 1.5 4 6.5 1.5 8C4 9.5 3.5 14.5 5.5 14.8M10.5 1.2C12.5 1.5 12 6.5 14.5 8C12 9.5 12.5 14.5 10.5 14.8" fill="#e6fafc" stroke="#3aa0b8" stroke-width="1.2" stroke-dasharray="3 .8"/><path d="M6 6.3H10M6 8.5H10M6 10.7H9" stroke="#3aa0b8" stroke-width="1.1"/><path d="M10.5 13.5H13.5M12.5 11.3L15.3 13.5L12.5 15.7Z" fill="#3aa0b8" stroke="#3aa0b8" stroke-width=".8"/></svg>
<div class="t" style="left:144px;top:640px;font-size:13px;color:#2a2a2a">Trigger Functions</div>
<svg style="left:108px;top:667px" width="6" height="10" viewBox="0 0 6 10"><path d="M0.8 0.8L5 5L0.8 9.2" fill="none" stroke="#222" stroke-width="1.9"/></svg>
<svg style="left:123px;top:663px" width="16" height="16" viewBox="0 0 16 16"><rect x="1" y="1" width="11" height="11" rx="1.5" fill="#dcf7ec" stroke="#4cc3a0" stroke-width="1.1"/><rect x="4" y="4" width="11" height="11" rx="1.5" fill="#dcf7ec" stroke="#4cc3a0" stroke-width="1.1"/></svg>
<div class="t" style="left:144px;top:664px;font-size:13px;color:#2a2a2a">Types</div>
<svg style="left:108px;top:691px" width="6" height="10" viewBox="0 0 6 10"><path d="M0.8 0.8L5 5L0.8 9.2" fill="none" stroke="#222" stroke-width="1.9"/></svg>
<svg style="left:123px;top:687px" width="16" height="16" viewBox="0 0 16 16"><rect x="1" y="1" width="12" height="12" rx="1" fill="#c5ec3e" stroke="#9ccc1c" stroke-width="1"/><rect x="3.5" y="3.5" width="12" height="12" rx="1" fill="#c5ec3e" stroke="#8fc313" stroke-width="1"/><rect x="5.8" y="5.8" width="7.4" height="7.4" fill="none" stroke="#fff" stroke-width="1"/><rect x="8" y="8" width="3" height="3" fill="none" stroke="#8fc313" stroke-width="1"/></svg>
<div class="t" style="left:144px;top:688px;font-size:13px;color:#2a2a2a">Views</div>
<svg style="left:76px;top:715px" width="6" height="10" viewBox="0 0 6 10"><path d="M0.8 0.8L5 5L0.8 9.2" fill="none" stroke="#222" stroke-width="1.9"/></svg>
<svg style="left:91px;top:711px" width="16" height="16" viewBox="0 0 16 16"><path d="M4 5A8 8 0 0 0 12.5 13.5Z" fill="#fbe0cc" stroke="#e88b45" stroke-width="1.2"/><path d="M2.5 7.5A7 7 0 0 0 10 15" fill="none" stroke="#e88b45" stroke-width="1.1"/><path d="M8.2 9.3L5.5 6.5" stroke="#e88b45" stroke-width="1.2"/><circle cx="5.5" cy="6.5" r="1" fill="#e88b45"/><path d="M5 1.5A3.8 3.8 0 0 0 1.5 5M4.5 3.3A1.8 1.8 0 0 0 3.2 4.7" fill="none" stroke="#e88b45" stroke-width="1"/></svg>
<div class="t" style="left:112px;top:712px;font-size:13px;color:#2a2a2a">Subscriptions</div>
<div class="ab" style="left:278px;top:5px;width:8px;height:651px;background:#c8ccd3;border-radius:4px"></div>
</div>
<div class="ab" style="left:290px;top:583px;width:1150px;height:277px;background:#fff;overflow:hidden">
<div class="ab" style="left:0;top:0;width:1px;height:277px;background:#dde0e6"></div>
<div class="ab" style="left:0;top:40px;width:1133px;height:1px;background:#dde0e6"></div>
<div class="ab" style="left:44px;top:0;width:1px;height:237px;background:#dde0e6"></div>
<div class="ab" style="left:140px;top:0;width:1px;height:237px;background:#dde0e6"></div>
<div class="ab" style="left:223px;top:0;width:1px;height:237px;background:#dde0e6"></div>
<div class="ab" style="left:375px;top:0;width:1px;height:237px;background:#dde0e6"></div>
<div class="ab" style="left:566px;top:0;width:1px;height:237px;background:#dde0e6"></div>
<div class="ab" style="left:0;top:65px;width:1133px;height:1px;background:#dde0e6"></div>
<div class="t" style="left:8px;top:47px;font-size:12.5px;color:#222">1</div>
<div class="t" style="left:44px;width:87px;text-align:right;top:47px;font-size:12.5px;color:#222"></div>
<div class="t" style="left:140px;width:75px;text-align:right;top:47px;font-size:12.5px;color:#222"></div>
<div class="t" style="left:233px;top:47px;font-size:12.5px;color:#222"></div>
<div class="t" style="left:384px;top:47px;font-size:12px;color:#222"></div>
<div class="ab" style="left:575px;top:44px;width:558px;height:20px;overflow:hidden"><div class="t" style="left:0;top:3px;font-size:12.5px;color:#222"></div></div>
<div class="ab" style="left:0;top:90px;width:1133px;height:1px;background:#dde0e6"></div>
<div class="t" style="left:8px;top:72px;font-size:12.5px;color:#222">2</div>
<div class="t" style="left:44px;width:87px;text-align:right;top:72px;font-size:12.5px;color:#222"></div>
<div class="t" style="left:140px;width:75px;text-align:right;top:72px;font-size:12.5px;color:#222"></div>
<div class="t" style="left:233px;top:72px;font-size:12.5px;color:#222"></div>
<div class="t" style="left:384px;top:72px;font-size:12px;color:#222"></div>
<div class="ab" style="left:575px;top:69px;width:558px;height:20px;overflow:hidden"><div class="t" style="left:0;top:3px;font-size:12.5px;color:#222"></div></div>
<div class="ab" style="left:0;top:115px;width:1133px;height:1px;background:#dde0e6"></div>
<div class="t" style="left:8px;top:97px;font-size:12.5px;color:#222">3</div>
<div class="t" style="left:44px;width:87px;text-align:right;top:97px;font-size:12.5px;color:#222">324060</div>
<div class="t" style="left:140px;width:75px;text-align:right;top:97px;font-size:12.5px;color:#222">899</div>
<div class="t" style="left:233px;top:97px;font-size:12.5px;color:#222">W.H.</div>
<div class="t" style="left:384px;top:97px;font-size:12px;color:#222">2022-12-06 16:44:28</div>
<div class="ab" style="left:575px;top:94px;width:558px;height:20px;overflow:hidden"><div class="t" style="left:0;top:3px;font-size:12.5px;color:#222">Google <span style="font-size:11.75px;color:#333">一下「</span>ChatGPT<span style="font-size:11.75px;color:#333">」</span>:</div></div>
<div class="ab" style="left:0;top:140px;width:1133px;height:1px;background:#dde0e6"></div>
<div class="t" style="left:8px;top:122px;font-size:12.5px;color:#222">4</div>
<div class="t" style="left:44px;width:87px;text-align:right;top:122px;font-size:12.5px;color:#222">324063</div>
<div class="t" style="left:140px;width:75px;text-align:right;top:122px;font-size:12.5px;color:#222">902</div>
<div class="t" style="left:233px;top:122px;font-size:12.5px;color:#222"><span style="font-size:11.75px;color:#333">大歐派蘿莉</span></div>
<div class="t" style="left:384px;top:122px;font-size:12px;color:#222">2022-12-07 15:09:18</div>
<div class="ab" style="left:575px;top:119px;width:558px;height:20px;overflow:hidden"><div class="t" style="left:0;top:3px;font-size:12.5px;color:#222"><span style="font-size:11.75px;color:#333">以前經常把雜湊與加密的概念混淆在一起，想說不都是變成看不懂的東西嗎</span>?</div></div>
<div class="ab" style="left:0;top:165px;width:1133px;height:1px;background:#dde0e6"></div>
<div class="t" style="left:8px;top:147px;font-size:12.5px;color:#222">5</div>
<div class="t" style="left:44px;width:87px;text-align:right;top:147px;font-size:12.5px;color:#222">324127</div>
<div class="t" style="left:140px;width:75px;text-align:right;top:147px;font-size:12.5px;color:#222">894</div>
<div class="t" style="left:233px;top:147px;font-size:12.5px;color:#222">jokkn5423</div>
<div class="t" style="left:384px;top:147px;font-size:12px;color:#222">2022-12-15 20:06:17</div>
<div class="ab" style="left:575px;top:144px;width:558px;height:20px;overflow:hidden"><div class="t" style="left:0;top:3px;font-size:12.5px;color:#999">[null]</div></div>
<div class="ab" style="left:0;top:190px;width:1133px;height:1px;background:#dde0e6"></div>
<div class="t" style="left:8px;top:172px;font-size:12.5px;color:#222">6</div>
<div class="t" style="left:44px;width:87px;text-align:right;top:172px;font-size:12.5px;color:#222">324191</div>
<div class="t" style="left:140px;width:75px;text-align:right;top:172px;font-size:12.5px;color:#222">808</div>
<div class="t" style="left:233px;top:172px;font-size:12.5px;color:#222">eric19740521</div>
<div class="t" style="left:384px;top:172px;font-size:12px;color:#222">2022-12-24 20:56:10</div>
<div class="ab" style="left:575px;top:169px;width:558px;height:20px;overflow:hidden"><div class="t" style="left:0;top:3px;font-size:12.5px;color:#222">1.WordPress <span style="font-size:11.75px;color:#333">主機</span> <span style="font-size:11.75px;color:#333">就是一個</span>PHP<span style="font-size:11.75px;color:#333">類的網站</span>..<span style="font-size:11.75px;color:#333">隨便都一把便宜的</span>.</div></div>
<div class="ab" style="left:0;top:215px;width:1133px;height:1px;background:#dde0e6"></div>
<div class="t" style="left:8px;top:197px;font-size:12.5px;color:#222">7</div>
<div class="t" style="left:44px;width:87px;text-align:right;top:197px;font-size:12.5px;color:#222">324193</div>
<div class="t" style="left:140px;width:75px;text-align:right;top:197px;font-size:12.5px;color:#222">815</div>
<div class="t" style="left:233px;top:197px;font-size:12.5px;color:#222">I.T. Wang</div>
<div class="t" style="left:384px;top:197px;font-size:12px;color:#222">2022-12-25 11:18:21</div>
<div class="ab" style="left:575px;top:194px;width:558px;height:20px;overflow:hidden"><div class="t" style="left:0;top:3px;font-size:12.5px;color:#222"><span style="font-size:11.75px;color:#333">感謝樓主提供資訊，建議可以記錄型號</span>(h660wm)<span style="font-size:11.75px;color:#333">與韌體版本，的確在特定版本可能會遇到有的沒的，升版</span></div></div>
<div class="ab" style="left:0;top:240px;width:1133px;height:1px;background:#dde0e6"></div>
<div class="t" style="left:8px;top:222px;font-size:12.5px;color:#222">8</div>
<div class="t" style="left:44px;width:87px;text-align:right;top:222px;font-size:12.5px;color:#222">324194</div>
<div class="t" style="left:140px;width:75px;text-align:right;top:222px;font-size:12.5px;color:#222">815</div>
<div class="t" style="left:233px;top:222px;font-size:12.5px;color:#222"><span style="font-size:11.75px;color:#333">門神</span>JanusLin</div>
<div class="t" style="left:384px;top:222px;font-size:12px;color:#222">2022-12-26 06:31:28</div>
<div class="ab" style="left:575px;top:219px;width:558px;height:20px;overflow:hidden"><div class="t" style="left:0;top:3px;font-size:12.5px;color:#222"><span style="font-size:11.75px;color:#333">這是一個很歡樂的型號</span></div></div>
<div class="ab" style="left:45px;top:0;width:7px;height:237px;background:linear-gradient(90deg,rgba(0,0,0,.045),rgba(0,0,0,0))"></div>
<div class="ab" style="left:0;top:237px;width:1150px;height:15px;background:#f3f4f6"></div>
<div class="ab" style="left:4px;top:242px;width:899px;height:7px;background:#c8ccd3;border-radius:4px"></div>
<div class="ab" style="left:1133px;top:1px;width:16px;height:236px;background:#f1f2f4"></div>
<div class="ab" style="left:1137px;top:5px;width:8px;height:53px;background:#c8ccd6;border-radius:4px"></div>
<div class="ab" style="left:0;top:252px;width:1150px;height:25px;background:#ebeef3;border-top:1px solid #dde0e6"></div>
<div class="t" style="left:12px;top:258px;font-size:14px;color:#222">Total rows: 35 of 35</div>
<div class="ab" style="left:150px;top:253px;width:1px;height:24px;background:#dde0e6"></div>
<div class="t" style="left:163px;top:258px;font-size:14px;color:#222">Query complete 00:00:01.203</div>
<div class="ab" style="left:362px;top:253px;width:1px;height:24px;background:#dde0e6"></div>
<div class="t" style="left:1069px;top:258px;font-size:14px;color:#222">Ln 1, Col 1</div>
</div>
<div class="ab" style="left:290px;top:583px;width:1150px;height:1px;background:#dde0e6"></div>
<div class="ab" style="left:287px;top:723px;width:3px;height:25px;background:#326690"></div>
<div class="ab" style="left:270px;top:131px;width:900px;height:550px;background:#fff;border-radius:4px;overflow:hidden;box-shadow:0px 11px 15px -7px rgba(25,40,70,0.17),0px 24px 38px 3px rgba(25,40,70,0.15),0px 9px 46px 8px rgba(25,40,70,0.18),0 -4px 20px 2px rgba(25,40,70,0.16)">
<div class="ab" style="left:0;top:31px;width:900px;height:1px;background:#dde0e6"></div>
<svg style="left:13px;top:9px" width="15" height="14" viewBox="0 0 15 14"><rect x="0.7" y="0.7" width="13.6" height="12.6" rx="1.5" fill="#eef2f5" stroke="#5aaef0" stroke-width="1.3"/><path d="M0.7 4.8H14.3M0.7 8.8H14.3M7.5 0.7V13.3" stroke="#5aaef0" stroke-width="1"/><path d="M1 5.4H14M1 9.4H14" stroke="#d6dce2" stroke-width=".7"/></svg>
<div class="t" style="left:30px;top:8px;font-size:13px;font-weight:bold;color:#222">response</div>
<svg style="left:853px;top:8px" width="14" height="14" viewBox="0 0 14 14"><path d="M10 4L7.6 6.4M6.4 7.6L4 10" stroke="#222" stroke-width="1.9"/><path d="M8.5 0.8H13.2V5.5Z M0.8 8.5V13.2H5.5Z" fill="#222"/></svg>
<svg style="left:877px;top:9px" width="12" height="12" viewBox="0 0 12 12"><path d="M1.2 1.2L10.8 10.8M10.8 1.2L1.2 10.8" stroke="#222" stroke-width="2.2"/></svg>
<div class="t" style="left:10px;top:39px;font-size:14px;color:#222">General</div>
<div class="t" style="left:80px;top:39px;font-size:14px;color:#222">Columns</div>
<div class="t" style="left:158px;top:39px;font-size:14px;color:#222">Advanced</div>
<div class="t" style="left:243px;top:39px;font-size:14px;color:#222">Constraints</div>
<div class="t" style="left:339px;top:39px;font-size:14px;color:#222">Parameters</div>
<div class="t" style="left:435px;top:39px;font-size:14px;color:#222">Security</div>
<div class="t" style="left:509px;top:39px;font-size:14px;color:#222">SQL</div>
<div class="ab" style="left:70px;top:59px;width:79px;height:3px;background:#326690"></div>
<div class="ab" style="left:0;top:62px;width:900px;height:437px;background:#ebeef3;border-top:1px solid #dde0e6;border-bottom:1px solid #dde0e6"></div>
<div class="t" style="left:14px;top:76px;font-size:14.5px;color:#222">Inherited from table(s)</div>
<div class="ab" style="left:230px;top:72px;width:661px;height:30px;background:#fff;border:1px solid #dde0e6;border-radius:4px"></div>
<div class="t" style="left:240px;top:79px;font-size:14px;color:#777">Select to inherit from...</div>
<div class="ab" style="left:862px;top:80px;width:1px;height:14px;background:#ccc"></div>
<svg style="left:870px;top:84px" width="12" height="7" viewBox="0 0 12 7"><path d="M1 1L6 6L11 1" fill="none" stroke="#b3b3b3" stroke-width="1.6"/></svg>
<div class="ab" style="left:8px;top:114px;width:883px;height:274px;background:#fff;border:1px solid #dde0e6;border-radius:2px"></div>
<div class="t" style="left:17px;top:122px;font-size:13.5px;font-weight:bold;color:#222">Columns</div>
<svg style="left:866px;top:123px" width="14" height="14" viewBox="0 0 14 14"><path d="M7 0V14M0 7H14" stroke="#222" stroke-width="2"/></svg>
<div class="ab" style="left:9px;top:145px;width:881px;height:1px;background:#dde0e6"></div>
<div class="ab" style="left:34px;top:145px;width:1px;height:242px;background:#dde0e6"></div>
<div class="ab" style="left:60px;top:145px;width:1px;height:242px;background:#dde0e6"></div>
<div class="ab" style="left:218px;top:145px;width:1px;height:242px;background:#dde0e6"></div>
<div class="ab" style="left:424px;top:145px;width:1px;height:242px;background:#dde0e6"></div>
<div class="ab" style="left:544px;top:145px;width:1px;height:242px;background:#dde0e6"></div>
<div class="ab" style="left:604px;top:145px;width:1px;height:242px;background:#dde0e6"></div>
<div class="ab" style="left:684px;top:145px;width:1px;height:242px;background:#dde0e6"></div>
<div class="ab" style="left:784px;top:145px;width:1px;height:242px;background:#dde0e6"></div>
<div class="ab" style="left:887px;top:145px;width:1px;height:242px;background:#dde0e6"></div>
<div class="t" style="left:65px;top:157px;font-size:13.5px;font-weight:bold;color:#222">Name</div>
<div class="t" style="left:223px;top:157px;font-size:13.5px;font-weight:bold;color:#222">Data type</div>
<div class="t" style="left:429px;top:157px;font-size:13.5px;font-weight:bold;color:#222">Length/Precision</div>
<div class="t" style="left:549px;top:157px;font-size:13.5px;font-weight:bold;color:#222">Scale</div>
<div class="t" style="left:609px;top:157px;font-size:13.5px;font-weight:bold;color:#222">Not NULL?</div>
<div class="t" style="left:689px;top:157px;font-size:13.5px;font-weight:bold;color:#222">Primary key?</div>
<div class="t" style="left:789px;top:157px;font-size:13.5px;font-weight:bold;color:#222">Default</div>
<div class="ab" style="left:9px;top:223px;width:881px;height:1px;background:#dde0e6"></div>
<svg style="left:14px;top:190px" width="16" height="16" viewBox="0 0 16 16"><path d="M0.5 12.5V15.5H3.5L12.3 6.7L9.3 3.7Z M14.3 4.7A.8.8 0 0 0 14.3 3.6L12.4 1.7A.8.8 0 0 0 11.3 1.7L9.9 3.1L12.9 6.1Z" fill="#222"/></svg>
<svg style="left:42px;top:190px" width="12" height="16" viewBox="0 0 12 16"><path d="M0.3 2H11.7V4H0.3Z M4 0.6H8V2H4Z M1 4.8H11V14.2A1.5 1.5 0 0 1 9.5 15.7H2.5A1.5 1.5 0 0 1 1 14.2Z" fill="#222"/></svg>
<div class="ab" style="left:65px;top:187px;width:149px;height:32px;background:#fff;border:1px solid #dde0e6;border-radius:4px"></div>
<div class="t" style="left:77px;top:195px;font-size:14px;color:#222">id</div>
<div class="ab" style="left:223px;top:187px;width:197px;height:32px;background:#fff;border:1px solid #dde0e6;border-radius:4px"></div>
<div class="t" style="left:234px;top:195px;font-size:14px;color:#222">integer</div>
<div class="ab" style="left:390px;top:196px;width:1px;height:14px;background:#ccc"></div>
<svg style="left:399px;top:200px" width="12" height="7" viewBox="0 0 12 7"><path d="M1 1L6 6L11 1" fill="none" stroke="#b3b3b3" stroke-width="1.6"/></svg>
<div class="ab" style="left:789px;top:187px;width:94px;height:31px;background:#fff;border:1px solid #dde0e6;border-radius:4px"></div>
<div class="ab" style="left:621px;top:194px;width:34px;height:14px;border-radius:7px;background:#98b2c7"></div><div class="ab" style="left:637px;top:191px;width:20px;height:20px;border-radius:50%;background:#326690;box-shadow:0 2px 1px -1px rgba(0,0,0,.2),0 1px 1px 0 rgba(0,0,0,.14),0 1px 3px 0 rgba(0,0,0,.12)"></div>
<div class="ab" style="left:701px;top:194px;width:34px;height:14px;border-radius:7px;background:#b3c6d6"></div><div class="ab" style="left:717px;top:191px;width:20px;height:20px;border-radius:50%;background:#678dad;box-shadow:0 2px 1px -1px rgba(0,0,0,.2),0 1px 1px 0 rgba(0,0,0,.14),0 1px 3px 0 rgba(0,0,0,.12)"></div>
<div class="ab" style="left:9px;top:264px;width:881px;height:1px;background:#dde0e6"></div>
<svg style="left:14px;top:231px" width="16" height="16" viewBox="0 0 16 16"><path d="M0.5 12.5V15.5H3.5L12.3 6.7L9.3 3.7Z M14.3 4.7A.8.8 0 0 0 14.3 3.6L12.4 1.7A.8.8 0 0 0 11.3 1.7L9.9 3.1L12.9 6.1Z" fill="#222"/></svg>
<svg style="left:42px;top:231px" width="12" height="16" viewBox="0 0 12 16"><path d="M0.3 2H11.7V4H0.3Z M4 0.6H8V2H4Z M1 4.8H11V14.2A1.5 1.5 0 0 1 9.5 15.7H2.5A1.5 1.5 0 0 1 1 14.2Z" fill="#222"/></svg>
<div class="ab" style="left:65px;top:228px;width:149px;height:32px;background:#fff;border:1px solid #dde0e6;border-radius:4px"></div>
<div class="t" style="left:77px;top:236px;font-size:14px;color:#222">article_id</div>
<div class="ab" style="left:223px;top:228px;width:197px;height:32px;background:#fff;border:1px solid #dde0e6;border-radius:4px"></div>
<div class="t" style="left:234px;top:236px;font-size:14px;color:#222">integer</div>
<div class="ab" style="left:390px;top:237px;width:1px;height:14px;background:#ccc"></div>
<svg style="left:399px;top:241px" width="12" height="7" viewBox="0 0 12 7"><path d="M1 1L6 6L11 1" fill="none" stroke="#b3b3b3" stroke-width="1.6"/></svg>
<div class="ab" style="left:789px;top:228px;width:94px;height:31px;background:#fff;border:1px solid #dde0e6;border-radius:4px"></div>
<div class="ab" style="left:621px;top:235px;width:34px;height:14px;border-radius:7px;background:#98b2c7"></div><div class="ab" style="left:637px;top:232px;width:20px;height:20px;border-radius:50%;background:#326690;box-shadow:0 2px 1px -1px rgba(0,0,0,.2),0 1px 1px 0 rgba(0,0,0,.14),0 1px 3px 0 rgba(0,0,0,.12)"></div>
<div class="ab" style="left:697px;top:235px;width:34px;height:14px;border-radius:7px;background:#c2c2c2"></div><div class="ab" style="left:693px;top:232px;width:20px;height:20px;border-radius:50%;background:#fafafa;box-shadow:0 2px 1px -1px rgba(0,0,0,.2),0 1px 1px 0 rgba(0,0,0,.14),0 1px 3px 0 rgba(0,0,0,.12)"></div>
<div class="ab" style="left:9px;top:305px;width:881px;height:1px;background:#dde0e6"></div>
<svg style="left:14px;top:272px" width="16" height="16" viewBox="0 0 16 16"><path d="M0.5 12.5V15.5H3.5L12.3 6.7L9.3 3.7Z M14.3 4.7A.8.8 0 0 0 14.3 3.6L12.4 1.7A.8.8 0 0 0 11.3 1.7L9.9 3.1L12.9 6.1Z" fill="#222"/></svg>
<svg style="left:42px;top:272px" width="12" height="16" viewBox="0 0 12 16"><path d="M0.3 2H11.7V4H0.3Z M4 0.6H8V2H4Z M1 4.8H11V14.2A1.5 1.5 0 0 1 9.5 15.7H2.5A1.5 1.5 0 0 1 1 14.2Z" fill="#222"/></svg>
<div class="ab" style="left:65px;top:269px;width:149px;height:32px;background:#fff;border:1px solid #dde0e6;border-radius:4px"></div>
<div class="t" style="left:77px;top:277px;font-size:14px;color:#222">author</div>
<div class="ab" style="left:223px;top:269px;width:197px;height:32px;background:#fff;border:1px solid #dde0e6;border-radius:4px"></div>
<div class="t" style="left:234px;top:277px;font-size:14px;color:#222">character varying</div>
<div class="ab" style="left:390px;top:278px;width:1px;height:14px;background:#ccc"></div>
<svg style="left:399px;top:282px" width="12" height="7" viewBox="0 0 12 7"><path d="M1 1L6 6L11 1" fill="none" stroke="#b3b3b3" stroke-width="1.6"/></svg>
<div class="ab" style="left:429px;top:269px;width:111px;height:32px;background:#fff;border:1px solid #dde0e6;border-radius:4px"></div>
<div class="t" style="left:441px;top:277px;font-size:14px;color:#222">50</div>
<div class="ab" style="left:549px;top:269px;width:51px;height:32px;background:#f0f2f5;border:1px solid #dde0e6;border-radius:4px"></div>
<div class="ab" style="left:789px;top:269px;width:94px;height:31px;background:#fff;border:1px solid #dde0e6;border-radius:4px"></div>
<div class="ab" style="left:621px;top:276px;width:34px;height:14px;border-radius:7px;background:#98b2c7"></div><div class="ab" style="left:637px;top:273px;width:20px;height:20px;border-radius:50%;background:#326690;box-shadow:0 2px 1px -1px rgba(0,0,0,.2),0 1px 1px 0 rgba(0,0,0,.14),0 1px 3px 0 rgba(0,0,0,.12)"></div>
<div class="ab" style="left:697px;top:276px;width:34px;height:14px;border-radius:7px;background:#c2c2c2"></div><div class="ab" style="left:693px;top:273px;width:20px;height:20px;border-radius:50%;background:#fafafa;box-shadow:0 2px 1px -1px rgba(0,0,0,.2),0 1px 1px 0 rgba(0,0,0,.14),0 1px 3px 0 rgba(0,0,0,.12)"></div>
<div class="ab" style="left:9px;top:346px;width:881px;height:1px;background:#dde0e6"></div>
<svg style="left:14px;top:313px" width="16" height="16" viewBox="0 0 16 16"><path d="M0.5 12.5V15.5H3.5L12.3 6.7L9.3 3.7Z M14.3 4.7A.8.8 0 0 0 14.3 3.6L12.4 1.7A.8.8 0 0 0 11.3 1.7L9.9 3.1L12.9 6.1Z" fill="#222"/></svg>
<svg style="left:42px;top:313px" width="12" height="16" viewBox="0 0 12 16"><path d="M0.3 2H11.7V4H0.3Z M4 0.6H8V2H4Z M1 4.8H11V14.2A1.5 1.5 0 0 1 9.5 15.7H2.5A1.5 1.5 0 0 1 1 14.2Z" fill="#222"/></svg>
<div class="ab" style="left:65px;top:310px;width:149px;height:32px;background:#fff;border:1px solid #dde0e6;border-radius:4px"></div>
<div class="t" style="left:77px;top:318px;font-size:14px;color:#222">publish_time</div>
<div class="ab" style="left:223px;top:310px;width:197px;height:32px;background:#fff;border:1px solid #dde0e6;border-radius:4px"></div>
<div class="t" style="left:234px;top:318px;font-size:14px;color:#222">timestamp without tim...</div>
<div class="ab" style="left:390px;top:319px;width:1px;height:14px;background:#ccc"></div>
<svg style="left:399px;top:323px" width="12" height="7" viewBox="0 0 12 7"><path d="M1 1L6 6L11 1" fill="none" stroke="#b3b3b3" stroke-width="1.6"/></svg>
<div class="ab" style="left:429px;top:310px;width:111px;height:32px;background:#fff;border:1px solid #dde0e6;border-radius:4px"></div>
<div class="t" style="left:441px;top:318px;font-size:14px;color:#222">6</div>
<div class="ab" style="left:549px;top:310px;width:51px;height:32px;background:#f0f2f5;border:1px solid #dde0e6;border-radius:4px"></div>
<div class="ab" style="left:789px;top:310px;width:94px;height:31px;background:#fff;border:1px solid #dde0e6;border-radius:4px"></div>
<div class="ab" style="left:621px;top:317px;width:34px;height:14px;border-radius:7px;background:#98b2c7"></div><div class="ab" style="left:637px;top:314px;width:20px;height:20px;border-radius:50%;background:#326690;box-shadow:0 2px 1px -1px rgba(0,0,0,.2),0 1px 1px 0 rgba(0,0,0,.14),0 1px 3px 0 rgba(0,0,0,.12)"></div>
<div class="ab" style="left:697px;top:317px;width:34px;height:14px;border-radius:7px;background:#c2c2c2"></div><div class="ab" style="left:693px;top:314px;width:20px;height:20px;border-radius:50%;background:#fafafa;box-shadow:0 2px 1px -1px rgba(0,0,0,.2),0 1px 1px 0 rgba(0,0,0,.14),0 1px 3px 0 rgba(0,0,0,.12)"></div>
<div class="ab" style="left:9px;top:387px;width:881px;height:1px;background:#dde0e6"></div>
<svg style="left:14px;top:354px" width="16" height="16" viewBox="0 0 16 16"><path d="M0.5 12.5V15.5H3.5L12.3 6.7L9.3 3.7Z M14.3 4.7A.8.8 0 0 0 14.3 3.6L12.4 1.7A.8.8 0 0 0 11.3 1.7L9.9 3.1L12.9 6.1Z" fill="#222"/></svg>
<svg style="left:42px;top:354px" width="12" height="16" viewBox="0 0 12 16"><path d="M0.3 2H11.7V4H0.3Z M4 0.6H8V2H4Z M1 4.8H11V14.2A1.5 1.5 0 0 1 9.5 15.7H2.5A1.5 1.5 0 0 1 1 14.2Z" fill="#222"/></svg>
<div class="ab" style="left:65px;top:351px;width:149px;height:32px;background:#fff;border:1px solid #dde0e6;border-radius:4px"></div>
<div class="t" style="left:77px;top:359px;font-size:14px;color:#222">content</div>
<div class="ab" style="left:223px;top:351px;width:197px;height:32px;background:#fff;border:1px solid #dde0e6;border-radius:4px"></div>
<div class="t" style="left:234px;top:359px;font-size:14px;color:#222">text</div>
<div class="ab" style="left:390px;top:360px;width:1px;height:14px;background:#ccc"></div>
<svg style="left:399px;top:364px" width="12" height="7" viewBox="0 0 12 7"><path d="M1 1L6 6L11 1" fill="none" stroke="#b3b3b3" stroke-width="1.6"/></svg>
<div class="ab" style="left:789px;top:351px;width:94px;height:31px;background:#fff;border:1px solid #dde0e6;border-radius:4px"></div>
<div class="ab" style="left:617px;top:358px;width:34px;height:14px;border-radius:7px;background:#a0a0a0"></div><div class="ab" style="left:613px;top:355px;width:20px;height:20px;border-radius:50%;background:#fafafa;box-shadow:0 2px 1px -1px rgba(0,0,0,.2),0 1px 1px 0 rgba(0,0,0,.14),0 1px 3px 0 rgba(0,0,0,.12)"></div>
<div class="ab" style="left:697px;top:358px;width:34px;height:14px;border-radius:7px;background:#c2c2c2"></div><div class="ab" style="left:693px;top:355px;width:20px;height:20px;border-radius:50%;background:#fafafa;box-shadow:0 2px 1px -1px rgba(0,0,0,.2),0 1px 1px 0 rgba(0,0,0,.14),0 1px 3px 0 rgba(0,0,0,.12)"></div>
<div class="ab" style="left:8px;top:507px;width:38px;height:32px;background:#fff;border:1px solid #c9ced6;border-radius:4px"></div>
<svg style="left:17px;top:513px" width="20" height="20" viewBox="0 0 20 20"><circle cx="10" cy="10" r="10" fill="#222"/><rect x="8.7" y="8.5" width="2.6" height="7" fill="#fff"/><circle cx="10" cy="5.6" r="1.5" fill="#fff"/></svg>
<div class="ab" style="left:54px;top:507px;width:38px;height:32px;background:#fff;border:1px solid #c9ced6;border-radius:4px"></div>
<svg style="left:63px;top:513px" width="20" height="20" viewBox="0 0 20 20"><circle cx="10" cy="10" r="10" fill="#222"/><path d="M6.8 7.5A3.2 3.2 0 1 1 11.3 10.4C10.4 10.9 10 11.4 10 12.5" fill="none" stroke="#fff" stroke-width="2.2"/><circle cx="10" cy="15.5" r="1.4" fill="#fff"/></svg>
<div class="ab" style="left:648px;top:508px;width:75px;height:33px;background:#fff;border:1px solid #c9ced6;border-radius:4px"></div>
<svg style="left:657px;top:519px" width="12" height="12" viewBox="0 0 12 12"><path d="M0.8 0.8L11.2 11.2M11.2 0.8L0.8 11.2" stroke="#222" stroke-width="1.6"/></svg>
<div class="t" style="left:677px;top:516px;font-size:14px;color:#222">Close</div>
<div class="ab" style="left:731px;top:508px;width:75px;height:33px;background:#fff;border:1px solid #e3e6ea;border-radius:4px"></div>
<svg style="left:737px;top:517px" width="17" height="16" viewBox="0 0 17 16"><path d="M3.5 5A6 6 0 1 1 3.5 11" fill="none" stroke="#999" stroke-width="1.6"/><path d="M0.5 8.3L3.3 4.6L6 8.3Z" fill="#999"/><circle cx="9.3" cy="8" r="1.5" fill="#999"/></svg>
<div class="t" style="left:761px;top:516px;font-size:14px;color:#999">Reset</div>
<div class="ab" style="left:814px;top:507px;width:78px;height:35px;background:#84a3bd;border-radius:4px"></div>
<svg style="left:825px;top:517px" width="16" height="16" viewBox="0 0 16 16"><path d="M0 1.5A1.5 1.5 0 0 1 1.5 0H12L16 4V14.5A1.5 1.5 0 0 1 14.5 16H1.5A1.5 1.5 0 0 1 0 14.5Z" fill="#fff"/><rect x="2.5" y="2.3" width="9" height="3.2" fill="#84a3bd"/><circle cx="8" cy="11" r="2.3" fill="#84a3bd"/></svg>
<div class="t" style="left:847px;top:516px;font-size:14px;color:#fff">Save</div>
</div>
</body></html>
